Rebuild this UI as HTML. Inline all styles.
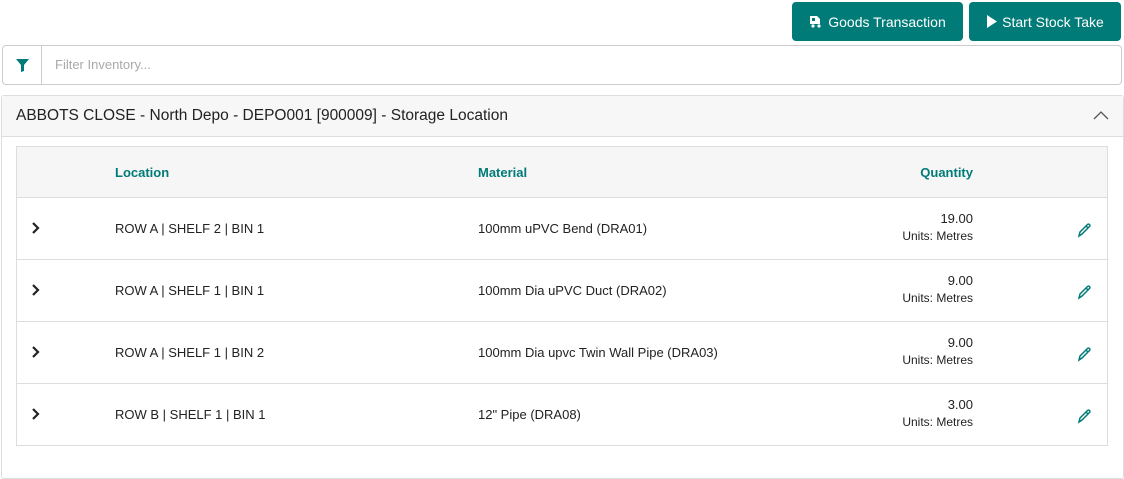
<!DOCTYPE html><html><head><style>
body{margin:0;width:1124px;height:478px;background:#fff;font-family:"Liberation Sans",sans-serif;color:#222;position:relative;overflow:hidden}
.btn{position:absolute;top:2px;height:39px;background:#007b78;border-radius:4px;color:#fff;font-size:14px;display:flex;align-items:center;justify-content:center;gap:5px}
.filter{position:absolute;left:2px;top:45px;width:1118px;height:38px;border:1px solid #ccc;border-radius:4px}
.filter .ic{position:absolute;left:0;top:0;width:38px;height:38px;border-right:1px solid #ccc;display:flex;align-items:center;justify-content:center}
.filter .ph{position:absolute;left:52px;top:11px;font-size:13px;color:#a9a9a9}
.panel{position:absolute;left:1px;top:95px;width:1121px;height:382px;border:1px solid #ddd;border-radius:3px}
.ph2{height:40px;background:#f7f7f7;border-bottom:1px solid #ddd;font-size:15.5px;line-height:40px;padding-left:14px;position:relative}
.tbl{position:absolute;left:14px;top:50px;width:1090px;height:298px;border:1px solid #ddd}
.hr{height:50px;background:#f6f6f6;border-bottom:1px solid #ddd;position:relative;font-weight:bold;color:#007b78;font-size:13px}
.row{height:61px;border-bottom:1px solid #ddd;position:relative;font-size:13px}
.row:last-child{border-bottom:none}
.a{position:absolute}
.u{font-size:12px;line-height:20px}
</style></head><body>
<div class="btn" style="left:792px;width:171px"><svg width="14" height="13" viewBox="0 0 14 13"><path d="M1 1h7l3 3v5H1z" fill="#fff"/><circle cx="4" cy="11" r="1.6" fill="#fff"/><circle cx="10" cy="11" r="1.6" fill="#fff"/><path d="M3 3h3v3H3z" fill="#007b78"/></svg>Goods Transaction</div>
<div class="btn" style="left:969px;width:152px"><svg width="11" height="13"><path d="M1 0L11 6.5 1 13z" fill="#fff"/></svg>Start Stock Take</div>
<div class="filter"><div class="ic"><svg width="13" height="13" viewBox="0 0 13 13"><path d="M0 0h13L8 6v6L5 13V6z" fill="#007b78"/></svg></div><div class="ph">Filter Inventory...</div></div>
<div class="panel">
<div class="ph2">ABBOTS CLOSE - North Depo - DEPO001 [900009] - Storage Location<svg class="a" style="right:14px;top:14px" width="16" height="10"><path d="M1 9L8 2l7 7" stroke="#555" stroke-width="1.3" fill="none"/></svg></div>
<div class="tbl">
<div class="hr"><span class="a" style="left:98px;top:18px">Location</span><span class="a" style="left:461px;top:18px">Material</span><span class="a" style="right:134px;top:18px">Quantity</span></div>
<div class="row"><svg class="a" style="left:14px;top:23px" width="9" height="14"><path d="M2 2l5 5-5 5" stroke="#222" stroke-width="2.2" fill="none"/></svg><span class="a" style="left:98px;top:23px">ROW A | SHELF 2 | BIN 1</span><span class="a" style="left:461px;top:23px">100mm uPVC Bend (DRA01)</span><span class="a" style="right:134px;top:13px;text-align:right">19.00<br><span class="u">Units: Metres</span></span><svg class="a" style="left:1060px;top:25px" width="15" height="15" viewBox="0 0 15 15"><path d="M2 13l1-4 7.5-7.5a1.4 1.4 0 0 1 2 2L5 11z M9 3l2.5 2.5" stroke="#007b78" stroke-width="1.5" fill="none"/></svg></div>
<div class="row"><svg class="a" style="left:14px;top:23px" width="9" height="14"><path d="M2 2l5 5-5 5" stroke="#222" stroke-width="2.2" fill="none"/></svg><span class="a" style="left:98px;top:23px">ROW A | SHELF 1 | BIN 1</span><span class="a" style="left:461px;top:23px">100mm Dia uPVC Duct (DRA02)</span><span class="a" style="right:134px;top:13px;text-align:right">9.00<br><span class="u">Units: Metres</span></span><svg class="a" style="left:1060px;top:25px" width="15" height="15" viewBox="0 0 15 15"><path d="M2 13l1-4 7.5-7.5a1.4 1.4 0 0 1 2 2L5 11z M9 3l2.5 2.5" stroke="#007b78" stroke-width="1.5" fill="none"/></svg></div>
<div class="row"><svg class="a" style="left:14px;top:23px" width="9" height="14"><path d="M2 2l5 5-5 5" stroke="#222" stroke-width="2.2" fill="none"/></svg><span class="a" style="left:98px;top:23px">ROW A | SHELF 1 | BIN 2</span><span class="a" style="left:461px;top:23px">100mm Dia upvc Twin Wall Pipe (DRA03)</span><span class="a" style="right:134px;top:13px;text-align:right">9.00<br><span class="u">Units: Metres</span></span><svg class="a" style="left:1060px;top:25px" width="15" height="15" viewBox="0 0 15 15"><path d="M2 13l1-4 7.5-7.5a1.4 1.4 0 0 1 2 2L5 11z M9 3l2.5 2.5" stroke="#007b78" stroke-width="1.5" fill="none"/></svg></div>
<div class="row"><svg class="a" style="left:14px;top:23px" width="9" height="14"><path d="M2 2l5 5-5 5" stroke="#222" stroke-width="2.2" fill="none"/></svg><span class="a" style="left:98px;top:23px">ROW B | SHELF 1 | BIN 1</span><span class="a" style="left:461px;top:23px">12" Pipe (DRA08)</span><span class="a" style="right:134px;top:13px;text-align:right">3.00<br><span class="u">Units: Metres</span></span><svg class="a" style="left:1060px;top:25px" width="15" height="15" viewBox="0 0 15 15"><path d="M2 13l1-4 7.5-7.5a1.4 1.4 0 0 1 2 2L5 11z M9 3l2.5 2.5" stroke="#007b78" stroke-width="1.5" fill="none"/></svg></div>
</div></div>
</body></html>
